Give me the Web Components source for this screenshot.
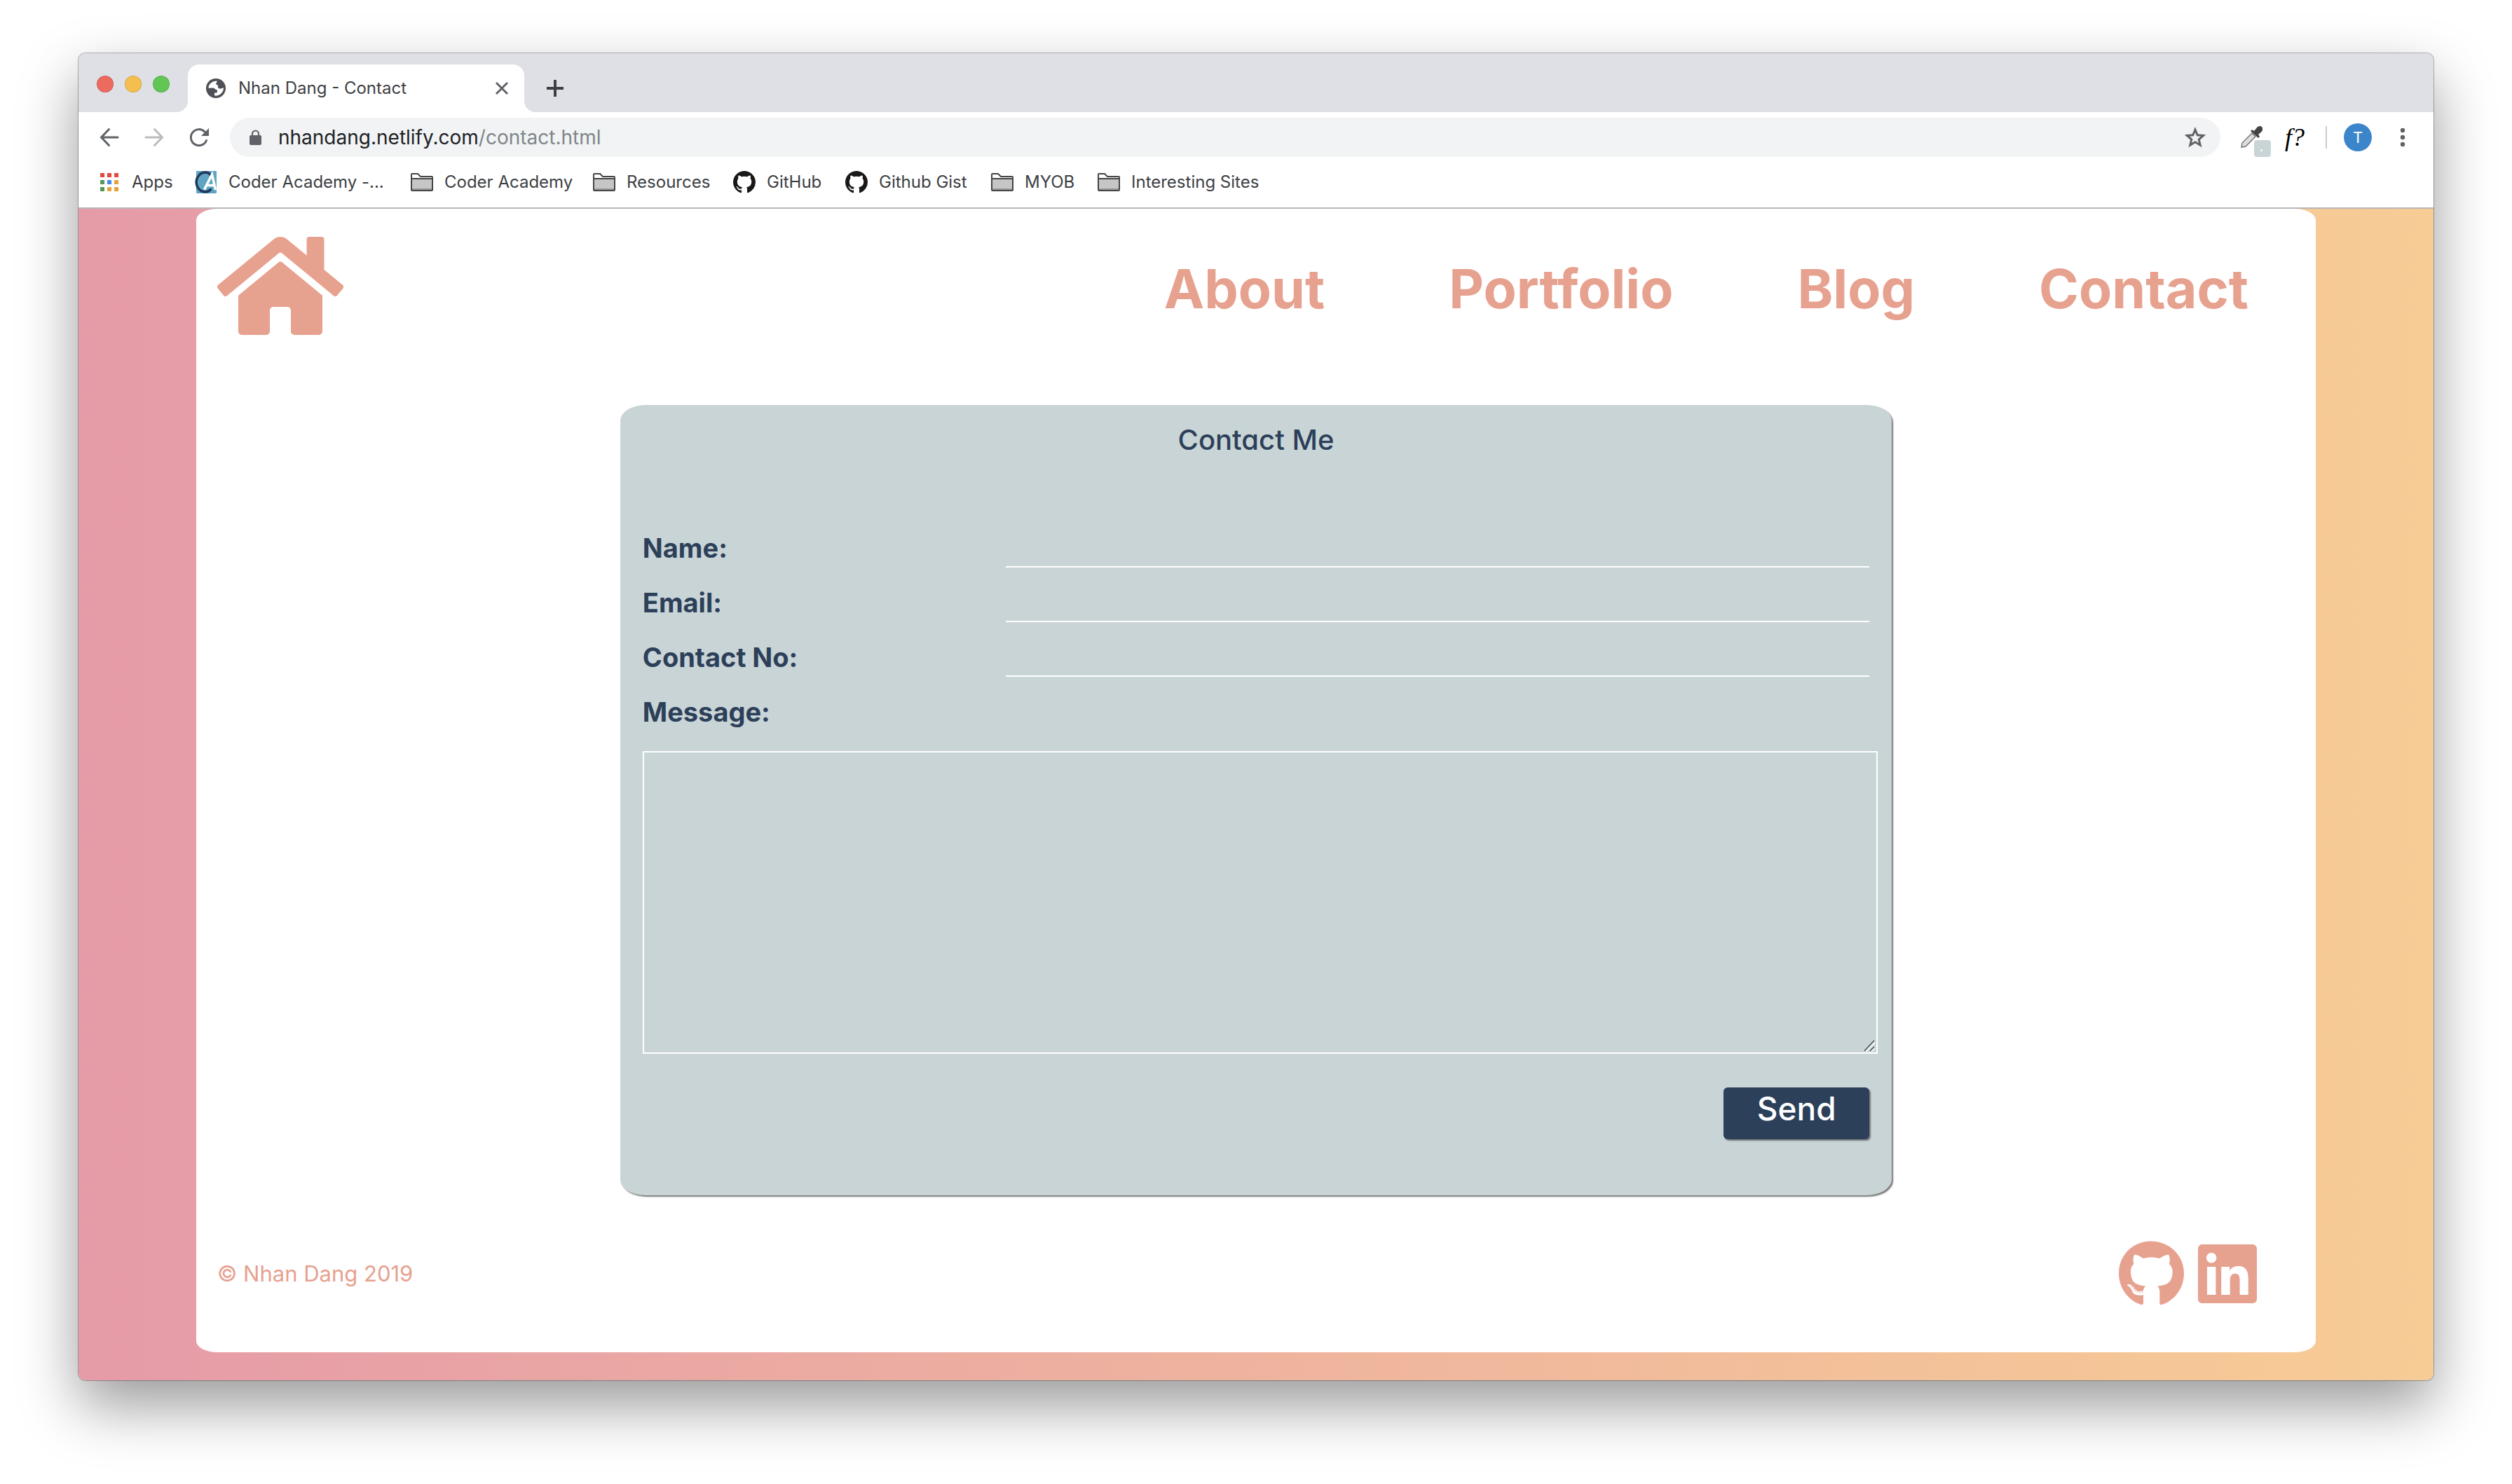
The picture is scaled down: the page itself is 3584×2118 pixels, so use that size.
<!DOCTYPE html>
<html lang="en">
<head>
<meta charset="utf-8">
<title>Nhan Dang - Contact</title>
<style>
  body { margin: 0; background: #fff; font-family: Inter, "Liberation Sans", sans-serif; color: #3c4043; }
</style>
</head>
<body>
<browser-window>
  <tab-strip slot="chrome"></tab-strip>
  <tool-bar slot="chrome"></tool-bar>
  <bookmark-bar slot="chrome"></bookmark-bar>
  <site-page>
    <site-header></site-header>
    <contact-form></contact-form>
    <site-footer></site-footer>
  </site-page>
</browser-window>

<script>
const GITHUB = 'M165.9 397.4c0 2-2.3 3.6-5.2 3.6-3.3.3-5.6-1.3-5.6-3.6 0-2 2.3-3.6 5.2-3.6 3-.3 5.6 1.3 5.6 3.6zm-31.1-4.5c-.7 2 1.3 4.3 4.3 4.9 2.6 1 5.6 0 6.2-2s-1.3-4.3-4.3-5.2c-2.6-.7-5.5.3-6.2 2.3zm44.2-1.7c-2.9.7-4.9 2.6-4.6 4.9.3 2 2.9 3.3 5.9 2.6 2.9-.7 4.9-2.6 4.6-4.6-.3-1.9-3-3.2-5.9-2.9zM244.8 8C106.1 8 0 113.3 0 252c0 110.9 69.8 205.8 169.5 239.2 12.8 2.3 17.3-5.6 17.3-12.1 0-6.2-.3-40.4-.3-61.4 0 0-70 15-84.7-29.8 0 0-11.4-29.1-27.8-36.6 0 0-22.9-15.7 1.6-15.4 0 0 24.9 2 38.6 25.8 21.9 38.6 58.6 27.5 72.9 20.9 2.3-16 8.8-27.1 16-33.7-55.9-6.2-112.3-14.3-112.3-110.5 0-27.5 7.6-41.3 23.6-58.9-2.6-6.5-11.1-33.3 2.6-67.9 20.9-6.5 69 27 69 27 20-5.6 41.5-8.5 62.8-8.5s42.8 2.9 62.8 8.5c0 0 48.1-33.6 69-27 13.7 34.7 5.2 61.4 2.6 67.9 16 17.7 25.8 31.5 25.8 58.9 0 96.5-58.9 104.2-114.8 110.5 9.2 7.9 17 22.9 17 46.4 0 33.7-.3 75.4-.3 83.6 0 6.5 4.6 14.4 17.3 12.1C428.2 457.8 496 362.9 496 252 496 113.3 383.5 8 244.8 8zM97.2 352.9c-1.3 1-1 3.3.7 5.2 1.6 1.6 3.9 2.3 5.2 1 1.3-1 1-3.3-.7-5.2-1.6-1.6-3.9-2.3-5.2-1zm-10.8-8.1c-.7 1.3.3 2.9 2.3 3.9 1.6 1 3.6.7 4.3-.7.7-1.3-.3-2.9-2.3-3.9-2-.6-3.6-.3-4.3.7zm32.4 35.6c-1.6 1.3-1 4.3 1.3 6.2 2.3 2.3 5.2 2.6 6.5 1 1.3-1.3.7-4.3-1.3-6.2-2.2-2.3-5.2-2.6-6.5-1zm-11.4-14.7c-1.6 1-1.6 3.6 0 5.9 1.6 2.3 4.3 3.3 5.6 2.3 1.6-1.3 1.6-3.9 0-6.2-1.4-2.3-4-3.3-5.6-2z';
const LINKEDIN = 'M416 32H31.9C14.3 32 0 46.5 0 64.3v383.4C0 465.5 14.3 480 31.9 480H416c17.6 0 32-14.5 32-32.3V64.3c0-17.8-14.4-32.3-32-32.3zM135.4 416H69V202.2h66.5V416zm-33.2-243c-21.3 0-38.5-17.3-38.5-38.5S80.9 96 102.2 96c21.2 0 38.5 17.3 38.5 38.5 0 21.3-17.2 38.5-38.5 38.5zm282.1 243h-66.4V312c0-24.8-.5-56.7-34.5-56.7-34.6 0-39.9 27-39.9 54.9V416h-66.4V202.2h63.7v29.2h.9c8.9-16.8 30.6-34.5 62.2-34.5 66.5 0 78.9 43.8 78.9 100.9V416z';
const HOME = 'M280.37 148.26L96 300.11V464a16 16 0 0 0 16 16l112.06-.29a16 16 0 0 0 15.92-16V368a16 16 0 0 1 16-16h64a16 16 0 0 1 16 16v95.64a16 16 0 0 0 16 16.05L464 480a16 16 0 0 0 16-16V300L295.67 148.26a12.19 12.19 0 0 0-15.3 0zM571.6 251.47L488 182.56V44.05a12 12 0 0 0-12-12h-56a12 12 0 0 0-12 12v72.61L318.47 43a48 48 0 0 0-61 0L4.34 251.47a12 12 0 0 0-1.6 16.9l25.5 31A12 12 0 0 0 45.15 301l235.22-193.74a12.19 12.19 0 0 1 15.3 0L530.9 301a12 12 0 0 0 16.9-1.6l25.5-31a12 12 0 0 0-1.7-16.93z';
const MARK = 'M8 0C3.58 0 0 3.58 0 8c0 3.54 2.29 6.53 5.47 7.59.4.07.55-.17.55-.38 0-.19-.01-.82-.01-1.49-2.01.37-2.53-.49-2.69-.94-.09-.23-.48-.94-.82-1.13-.28-.15-.68-.52-.01-.53.63-.01 1.08.58 1.23.82.72 1.21 1.87.87 2.33.66.07-.52.28-.87.51-1.07-1.78-.2-3.64-.89-3.64-3.95 0-.87.31-1.59.82-2.15-.08-.2-.36-1.02.08-2.12 0 0 .67-.21 2.2.82.64-.18 1.32-.27 2-.27s1.36.09 2 .27c1.53-1.04 2.2-.82 2.2-.82.44 1.1.16 1.92.08 2.12.51.56.82 1.27.82 2.15 0 3.07-1.87 3.75-3.65 3.95.29.25.54.73.54 1.48 0 1.07-.01 1.93-.01 2.2 0 .21.15.46.55.38A8.01 8.01 0 0 0 16 8c0-4.42-3.58-8-8-8z';

const define = (name, html) => customElements.define(name, class extends HTMLElement {
  constructor() {
    super();
    this.attachShadow({ mode: 'open' }).innerHTML = html;
  }
});

const RESET = `
  :host, *, *::before, *::after { box-sizing: border-box; }
  button { font: inherit; color: inherit; background: none; border: 0; padding: 0; margin: 0; }
  a { color: inherit; text-decoration: none; }
  svg { display: block; flex: none; }
`;

define('browser-window', `
  <style>
    :host { display: block; padding: 76px 112px 148px; }
    .frame {
      display: flex; flex-direction: column; overflow: hidden;
      border-radius: 10px; background: #fff;
      box-shadow: 0 0 0 1px rgba(0,0,0,.28), 0 36px 84px rgba(0,0,0,.4);
    }
  </style>
  <div class="frame"><slot name="chrome"></slot><slot></slot></div>
`);

define('tab-strip', `
  <style>${RESET}
    :host { display: flex; align-items: flex-end; height: 84px; background: #dee0e6; color: #3c4043; }
    .lights { display: flex; gap: 16px; padding: 0 26px 28px; }
    .lights button { width: 24px; height: 24px; border-radius: 50%; background: var(--c); border: 1px solid rgba(0,0,0,.12); }
    .tab {
      position: relative; display: flex; align-items: center; width: 480px; height: 68px;
      padding: 0 22px 0 26px; background: #fff; border-radius: 16px 16px 0 0; font-size: 24px; line-height: 32px;
    }
    .tab::before, .tab::after { content: ""; position: absolute; bottom: 0; width: 16px; height: 16px; }
    .tab::before { left: -16px; background: radial-gradient(circle at 0 0, transparent 16px, #fff 16px); }
    .tab::after { right: -16px; background: radial-gradient(circle at 100% 0, transparent 16px, #fff 16px); }
    .title { flex: 1; padding-left: 18px; white-space: nowrap; }
    .new { padding: 0 30px 20px; }
  </style>
  <div class="lights">
    <button aria-label="Close" style="--c:#ed6a5f"></button>
    <button aria-label="Minimise" style="--c:#f5bf4f"></button>
    <button aria-label="Zoom" style="--c:#62c655"></button>
  </div>
  <div class="tab">
    <svg width="28" height="28" viewBox="0 0 28 28"><circle cx="14" cy="14" r="14" fill="#4d5156"/><path fill="#fff" d="M3.500 13.500C3.500 8 8.500 3.500 15.500 3.500C16 6 14 6 14 8.500q3 0 3 2.500c0 2 0 3 2 3.500 3 .5 4-1.500 6-1C25 20 19 25.500 12 24.500V20.500h2.500q1.500 0 1.500-2v-2c-3-.5-3-2-5-2.800-2-.5-5 .3-7.500-.2z"/></svg>
    <span class="title">Nhan Dang - Contact</span>
    <button aria-label="Close tab"><svg width="20" height="20" viewBox="0 0 20 20" stroke="#5f6368" stroke-width="3"><path d="M2 2l16 16M18 2L2 18"/></svg></button>
  </div>
  <button class="new" aria-label="New tab"><svg width="28" height="28" viewBox="0 0 28 28" stroke="#3c4043" stroke-width="4"><path d="M14 2v24M2 14h24"/></svg></button>
`);

define('tool-bar', `
  <style>${RESET}
    :host { display: flex; align-items: center; height: 72px; padding: 0 36px 0 28px; background: #fff; }
    .nav { display: flex; gap: 32px; padding-right: 28px; }
    .box { flex: 1; display: flex; align-items: center; height: 56px; padding: 0 20px 0 28px; border-radius: 28px; background: #f1f3f4; font-size: 28px; line-height: 36px; color: #202124; }
    .url { flex: 1; padding-left: 24px; }
    .url span { color: #80868b; }
    .tools { display: flex; align-items: center; }
    .picker { position: relative; margin: 0 20px 0 28px; }
    .picker i { position: absolute; left: 20px; top: 22px; width: 24px; height: 24px; border-radius: 4px; background: #c9d4d6; }
    .picker i::before { content: ""; position: absolute; left: 9px; top: 13px; width: 3px; height: 3px; border-radius: 50%; background: #fff; }
    .font { font: italic 36px/40px "Liberation Serif", serif; color: #000; width: 48px; text-align: center; }
    .bar { width: 2px; height: 32px; margin: 0 24px 0 20px; background: #ccc; }
    .user { width: 40px; height: 40px; border-radius: 50%; background: #3b86cb; color: #fff; font-size: 22px; line-height: 40px; text-align: center; }
    .dots { margin-left: 36px; }
  </style>
  <div class="nav">
    <button aria-label="Back"><svg width="32" height="32" viewBox="0 0 32 32" fill="none" stroke="#5f6368" stroke-width="3" stroke-linecap="round"><path d="M28 16H5M15.500 4.500L4.500 16l11 11.500"/></svg></button>
    <button aria-label="Forward"><svg width="32" height="32" viewBox="0 0 32 32" fill="none" stroke="#babcbe" stroke-width="3" stroke-linecap="round"><path d="M4 16h23M16.500 4.500l11 11.500-11 11.500"/></svg></button>
    <button aria-label="Reload"><svg width="32" height="32" viewBox="0 0 32 32"><path d="M26.500 20.500A11.500 11.500 0 1 1 24 8" fill="none" stroke="#5f6368" stroke-width="3" stroke-linecap="round"/><path d="M30 3v11H19z" fill="#5f6368"/></svg></button>
  </div>
  <div class="box">
    <svg width="17" height="22" viewBox="0 0 17 22"><rect y="8" width="17" height="14" rx="2" fill="#5f6368"/><path d="M4 9V6a4.500 4.500 0 0 1 9 0v3" fill="none" stroke="#5f6368" stroke-width="2.200"/></svg>
    <div class="url">nhandang.netlify.com<span>/contact.html</span></div>
    <button aria-label="Bookmark this page"><svg width="32" height="32" viewBox="0 0 32 32" fill="none" stroke="#5f6368" stroke-width="3"><path d="M16 5l3.200 7.800 8.400.7-6.400 5.500 2 8.200L16 22.800l-7.200 4.400 2-8.200-6.400-5.500 8.400-.7z"/></svg></button>
  </div>
  <div class="tools">
    <button class="picker" aria-label="Colour picker"><svg width="34" height="36" viewBox="0 0 34 36"><path d="M2 32l1-6L17 12l5 5L8 31z" fill="#ddd" stroke="#777" stroke-width="1.500"/><path d="M15 9l2-2 3 2 5-6c3-2 8-1 7 4 0 2-1 3-6 7l2 3-2 2z" fill="#444"/></svg><i></i></button>
    <button class="font">f?</button>
    <span class="bar"></span>
    <button class="user">T</button>
    <button class="dots" aria-label="Menu"><svg width="16" height="32" viewBox="0 0 16 32" fill="#5f6368"><circle cx="8" cy="6" r="3.200"/><circle cx="8" cy="16" r="3.200"/><circle cx="8" cy="26" r="3.200"/></svg></button>
  </div>
`);

const folder = '<svg slot="icon" width="32" height="32" viewBox="0 0 32 32"><path d="M1 27V5q0-1 1-1h8l4 4h16q1 0 1 1v18q0 1-1 1H2q-1 0-1-1z" fill="#fff" stroke="#454545" stroke-width="2"/><path d="M2 11h28v16H2z" fill="#c6c6c6"/><path d="M2 11h28" stroke="#454545" stroke-width="2"/><path d="M2 25h28v2H2z" fill="#999"/></svg>';
const mark = `<svg slot="icon" width="32" height="32" viewBox="0 0 16 16"><path fill="#191717" d="${MARK}"/></svg>`;

define('book-mark', `
  <style>${RESET}
    :host { display: block; }
    a { display: flex; align-items: center; gap: 16px; white-space: nowrap; }
  </style>
  <a href="#"><slot name="icon"></slot><slot></slot></a>
`);

define('bookmark-bar', `
  <style>${RESET}
    :host {
      display: grid; grid-template-columns: 138px 308px 260px 200px 160px 208px 152px 1fr; align-items: center;
      height: 66px; padding: 0 28px 8px; background: #fff; border-bottom: 2px solid #b6b7b9;
      font-size: 24px; line-height: 32px; color: #3c4043;
    }
  </style>
  <book-mark><svg slot="icon" width="32" height="32" viewBox="0 0 32 32"><path fill="#e04a3f" d="M3 3h6v6H3zM13 3h6v6h-6zM23 3h6v6h-6z"/><path fill="#55965a" d="M3 13h6v6H3zM3 23h6v6H3z"/><path fill="#4487f4" d="M13 13h6v6h-6z"/><path fill="#e5a33b" d="M23 13h6v6h-6zM13 23h6v6h-6zM23 23h6v6h-6z"/></svg>Apps</book-mark>
  <book-mark><svg slot="icon" width="32" height="32" viewBox="0 0 32 32"><rect x="2" width="29" height="32" rx="1" fill="#5fa5c3"/><path d="M22.500 5.500C18 .5 11 1.500 7 5C.5 11 .5 21 7 27c4 3.500 11 4.500 15.500-.5" fill="none" stroke="#20395c" stroke-width="3.500" stroke-linecap="round"/><path d="M13.500 26.500L24.500 5l5 22M17.500 20.500h10" fill="none" stroke="#fff" stroke-width="3.500"/></svg>Coder Academy -...</book-mark>
  <book-mark>${folder}Coder Academy</book-mark>
  <book-mark>${folder}Resources</book-mark>
  <book-mark>${mark}GitHub</book-mark>
  <book-mark>${mark}Github Gist</book-mark>
  <book-mark>${folder}MYOB</book-mark>
  <book-mark>${folder}Interesting Sites</book-mark>
`);

define('site-page', `
  <style>
    :host { display: block; padding: 0 5% 40px; background: linear-gradient(90deg, #e69ba8, #f7cc95); }
    .sheet { background: #fff; border-radius: 1%; padding: 30px 0 64px; color: #e7a18f; }
  </style>
  <div class="sheet"><slot></slot></div>
`);

define('site-header', `
  <style>${RESET}
    :host { display: flex; justify-content: space-between; align-items: center; padding: 0 96px 0 30px; }
    nav { display: flex; gap: 177px; padding-top: 8px; font-size: 77px; line-height: 96px; font-weight: 700; }
  </style>
  <a href="#" aria-label="Home"><svg width="180" height="160" viewBox="0 0 576 512" fill="currentColor"><path d="${HOME}"/></svg></a>
  <nav><a href="#">About</a><a href="#">Portfolio</a><a href="#">Blog</a><a href="#">Contact</a></nav>
`);

define('contact-form', `
  <style>${RESET}
    :host { display: block; width: 60%; margin: 90px auto 64px; }
    form { padding: 26px 32px 80px; border-radius: 2%; background: #c9d4d6; color: #2c4059; box-shadow: 2px 2px 2px #777; }
    h1 { margin: 0 0 80px; font-size: 40px; line-height: 48px; font-weight: 500; text-align: center; font-feature-settings: "cv11"; }
    .row { display: grid; grid-template-columns: 518px 1fr; align-items: end; height: 78px; }
    label { font-size: 38px; line-height: 56px; font-weight: 700; }
    input { width: 100%; height: 56px; margin: 0; padding: 0; border: 0; border-bottom: 2px solid #fff; border-radius: 0; background: none; font: inherit; font-size: 38px; color: inherit; }
    .area { position: relative; width: calc(100% + 12px); margin: 28px 0 48px; }
    textarea { display: block; width: 100%; height: 432px; margin: 0; padding: 8px; border: 2px solid #fff; border-radius: 0; background: none; font: inherit; font-size: 38px; color: inherit; resize: none; }
    .grip { position: absolute; right: 4px; bottom: 2px; pointer-events: none; }
    .send { display: block; width: 208px; height: 74px; margin-left: auto; padding-bottom: 14px; border-radius: 6px; background: #2c4059; color: #fff; font-size: 46px; line-height: 60px; font-weight: 500; box-shadow: 2px 2px 2px #777; font-feature-settings: "cv11"; }
  </style>
  <form>
    <h1>Contact Me</h1>
    <div class="row"><label for="name">Name:</label><input id="name" type="text"></div>
    <div class="row"><label for="email">Email:</label><input id="email" type="email"></div>
    <div class="row"><label for="phone">Contact No:</label><input id="phone" type="tel"></div>
    <div class="row"><label for="message">Message:</label></div>
    <div class="area">
      <textarea id="message"></textarea>
      <svg class="grip" width="16" height="18" viewBox="0 0 16 18" stroke-width="1.500"><path d="M3 17L16 4M11 17l5-5" stroke="#fff"/><path d="M1 16L15 1M9 16l6-6" stroke="#4c5253"/></svg>
    </div>
    <button class="send" type="button">Send</button>
  </form>
`);

define('site-footer', `
  <style>${RESET}
    :host { display: flex; justify-content: space-between; align-items: center; padding: 0 84px 0 30px; font-size: 31px; line-height: 40px; }
    .social { display: flex; gap: 20px; }
  </style>
  <span>© Nhan Dang 2019</span>
  <div class="social">
    <a href="#" aria-label="GitHub"><svg width="93" height="96" viewBox="0 0 496 512" fill="currentColor"><path d="${GITHUB}"/></svg></a>
    <a href="#" aria-label="LinkedIn"><svg width="84" height="96" viewBox="0 0 448 512" fill="currentColor"><path d="${LINKEDIN}"/></svg></a>
  </div>
`);
</script>
</body>
</html>
